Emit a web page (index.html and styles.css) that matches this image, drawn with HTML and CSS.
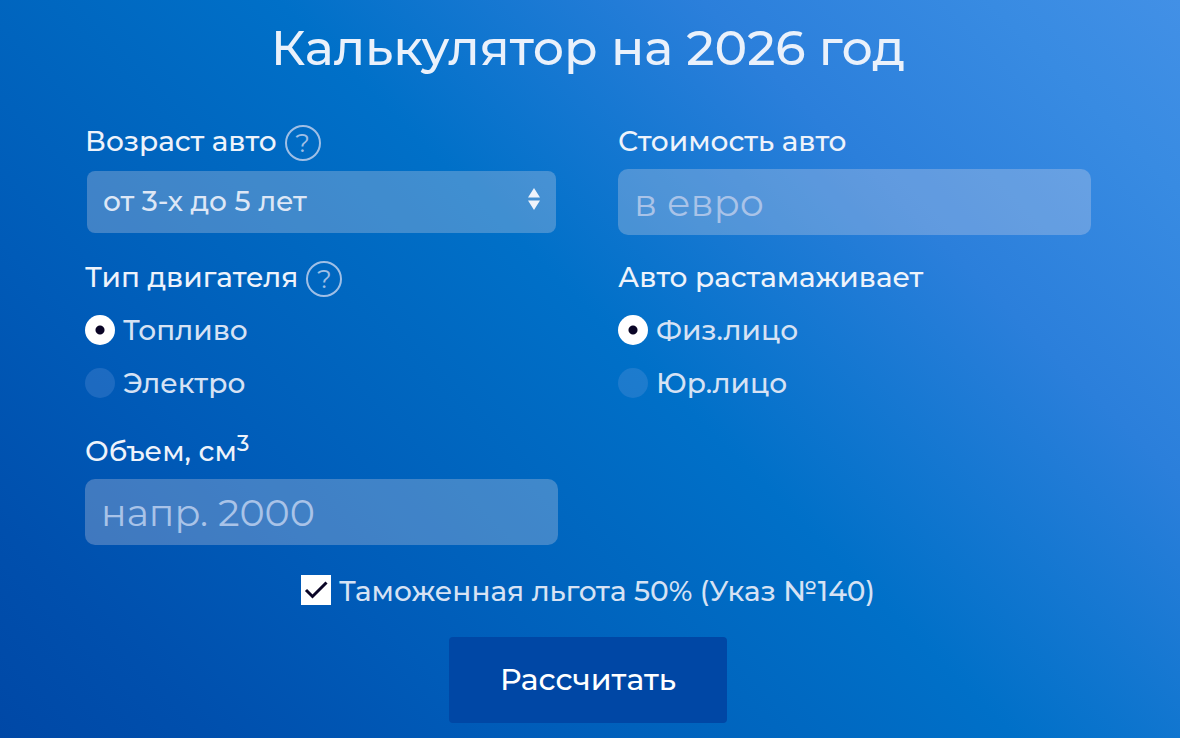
FILE: index.html
```
<!DOCTYPE html>
<html lang="ru">
<head>
  <meta charset="utf-8">
  <meta name="viewport" content="width=device-width, initial-scale=1">
  <title>Калькулятор на 2026 год</title>
  <link rel="stylesheet" href="styles.css">
</head>
<body>
  <form class="calc">
    <h1>Калькулятор на 2026 год</h1>

    <div class="calc-grid">
      <div class="field">
        <div class="field-title">
          <label for="age">Возраст авто</label>
          <button type="button" class="help">?</button>
        </div>
        <div class="select-wrap">
          <select id="age" class="control">
            <option>от 3-х до 5 лет</option>
          </select>
          <svg class="arrows" width="12" height="22" viewBox="0 0 12 22">
            <path d="M6 0 L12 9.5 H0 Z M0 12.5 H12 L6 22 Z" />
          </svg>
        </div>
      </div>

      <div class="field">
        <div class="field-title">
          <label for="price">Стоимость авто</label>
        </div>
        <input type="text" id="price" class="control" placeholder="в евро">
      </div>

      <fieldset class="field">
        <legend class="field-title">
          <span>Тип двигателя</span>
          <button type="button" class="help">?</button>
        </legend>
        <label class="option"><input type="radio" name="engine" checked>Топливо</label>
        <label class="option"><input type="radio" name="engine">Электро</label>
      </fieldset>

      <fieldset class="field">
        <legend class="field-title"><span>Авто растамаживает</span></legend>
        <label class="option"><input type="radio" name="person" checked>Физ.лицо</label>
        <label class="option"><input type="radio" name="person">Юр.лицо</label>
      </fieldset>

      <div class="field">
        <div class="field-title">
          <label for="volume">Объем, см<sup>3</sup></label>
        </div>
        <input type="text" id="volume" class="control" placeholder="напр. 2000">
      </div>
    </div>

    <label class="benefit">
      <span class="check">
        <input type="checkbox" checked>
        <svg width="30" height="30" viewBox="0 0 30 30">
          <path d="M5 15 L11.500 21.500 L25.500 7.500" />
        </svg>
      </span>
      <span class="benefit-text">Таможенная льгота 50% (Указ №140)</span>
    </label>

    <button type="submit" class="submit">Рассчитать</button>
  </form>
</body>
</html>
```

FILE: styles.css
```
* {
  box-sizing: border-box;
}

body {
  margin: 0;
  min-height: 100vh;
  font-family: Montserrat, Inter, sans-serif;
  font-size: 28px;
  font-weight: 500;
  line-height: 38px;
  color: #d6e2f4;
  background: linear-gradient(45deg, #0048a6 0%, #004fad 11%, #005bb8 26%, #0067c0 41%, #0070c8 53%, #2b7fdb 75%, #388be2 90%, #4290e6 100%);
}

.calc {
  padding: 18px 89px 15px 85px;
}

h1 {
  margin: 0 0 44px;
  font-size: 49px;
  line-height: 60px;
  font-weight: 500;
  text-align: center;
  color: #eaf1fb;
}

.calc-grid {
  display: grid;
  grid-template-columns: 1fr 1fr;
  column-gap: 60px;
  row-gap: 23px;
}

.field {
  min-width: 0;
  margin: 0;
  padding: 0;
  border: 0;
}

.field-title {
  display: flex;
  align-items: center;
  gap: 8px;
  height: 38px;
  margin-bottom: 9px;
  padding: 0;
  color: #eef3fb;
}

legend.field-title {
  margin-bottom: 7px;
}

sup {
  font-size: 22px;
  line-height: 0;
}

.help {
  width: 36px;
  height: 36px;
  margin-top: 4px;
  padding: 0;
  border: 2px solid #9fbfe6;
  border-radius: 50%;
  background: none;
  font: 400 26px/32px Montserrat, Inter, sans-serif;
  color: #9fbfe6;
  cursor: pointer;
}

.control {
  display: block;
  width: 100%;
  height: 66px;
  padding: 0 16px;
  border: 0;
  border-radius: 10px;
  background: rgba(255, 235, 235, 0.25);
  font-family: inherit;
  font-size: 38px;
  color: #dde7f6;
}

.control::placeholder {
  color: #a9c3e8;
  opacity: 1;
}

.select-wrap {
  position: relative;
  padding: 2px;
}

select.control {
  height: 62px;
  padding-bottom: 3px;
  font-size: 28px;
  font-weight: 500;
  border-radius: 8px;
  appearance: none;
}

.arrows {
  position: absolute;
  top: 19px;
  right: 18px;
  fill: #eef3fb;
  pointer-events: none;
}

.option {
  display: flex;
  align-items: center;
  gap: 8px;
  height: 53px;
}

.option input {
  width: 30px;
  height: 30px;
  margin: 0;
  border-radius: 50%;
  background: rgba(120, 165, 225, 0.24);
  appearance: none;
}

.option input:checked {
  background: radial-gradient(circle, #0a0526 4px, #fff 5px);
}

.benefit {
  display: flex;
  justify-content: center;
  align-items: center;
  gap: 8px;
  margin: 25px 0 27px;
}

.benefit-text {
  padding-top: 2px;
}

.check {
  position: relative;
  height: 30px;
}

.check input {
  display: block;
  width: 30px;
  height: 30px;
  margin: 0;
  background: #fff;
  appearance: none;
}

.check svg {
  position: absolute;
  top: 0;
  left: 0;
  fill: none;
  stroke: #0a0526;
  stroke-width: 3;
  visibility: hidden;
  pointer-events: none;
}

.check input:checked + svg {
  visibility: visible;
}

.submit {
  display: block;
  height: 86px;
  margin: 0 auto;
  padding: 0 51px 2px;
  border: 0;
  border-radius: 4px;
  background: #0047a5;
  font-family: inherit;
  font-size: 30px;
  font-weight: 500;
  color: #fff;
  cursor: pointer;
}

@media (max-width: 760px) {
  .calc {
    padding: 18px 20px;
  }

  .calc-grid {
    grid-template-columns: 1fr;
  }
}
```
